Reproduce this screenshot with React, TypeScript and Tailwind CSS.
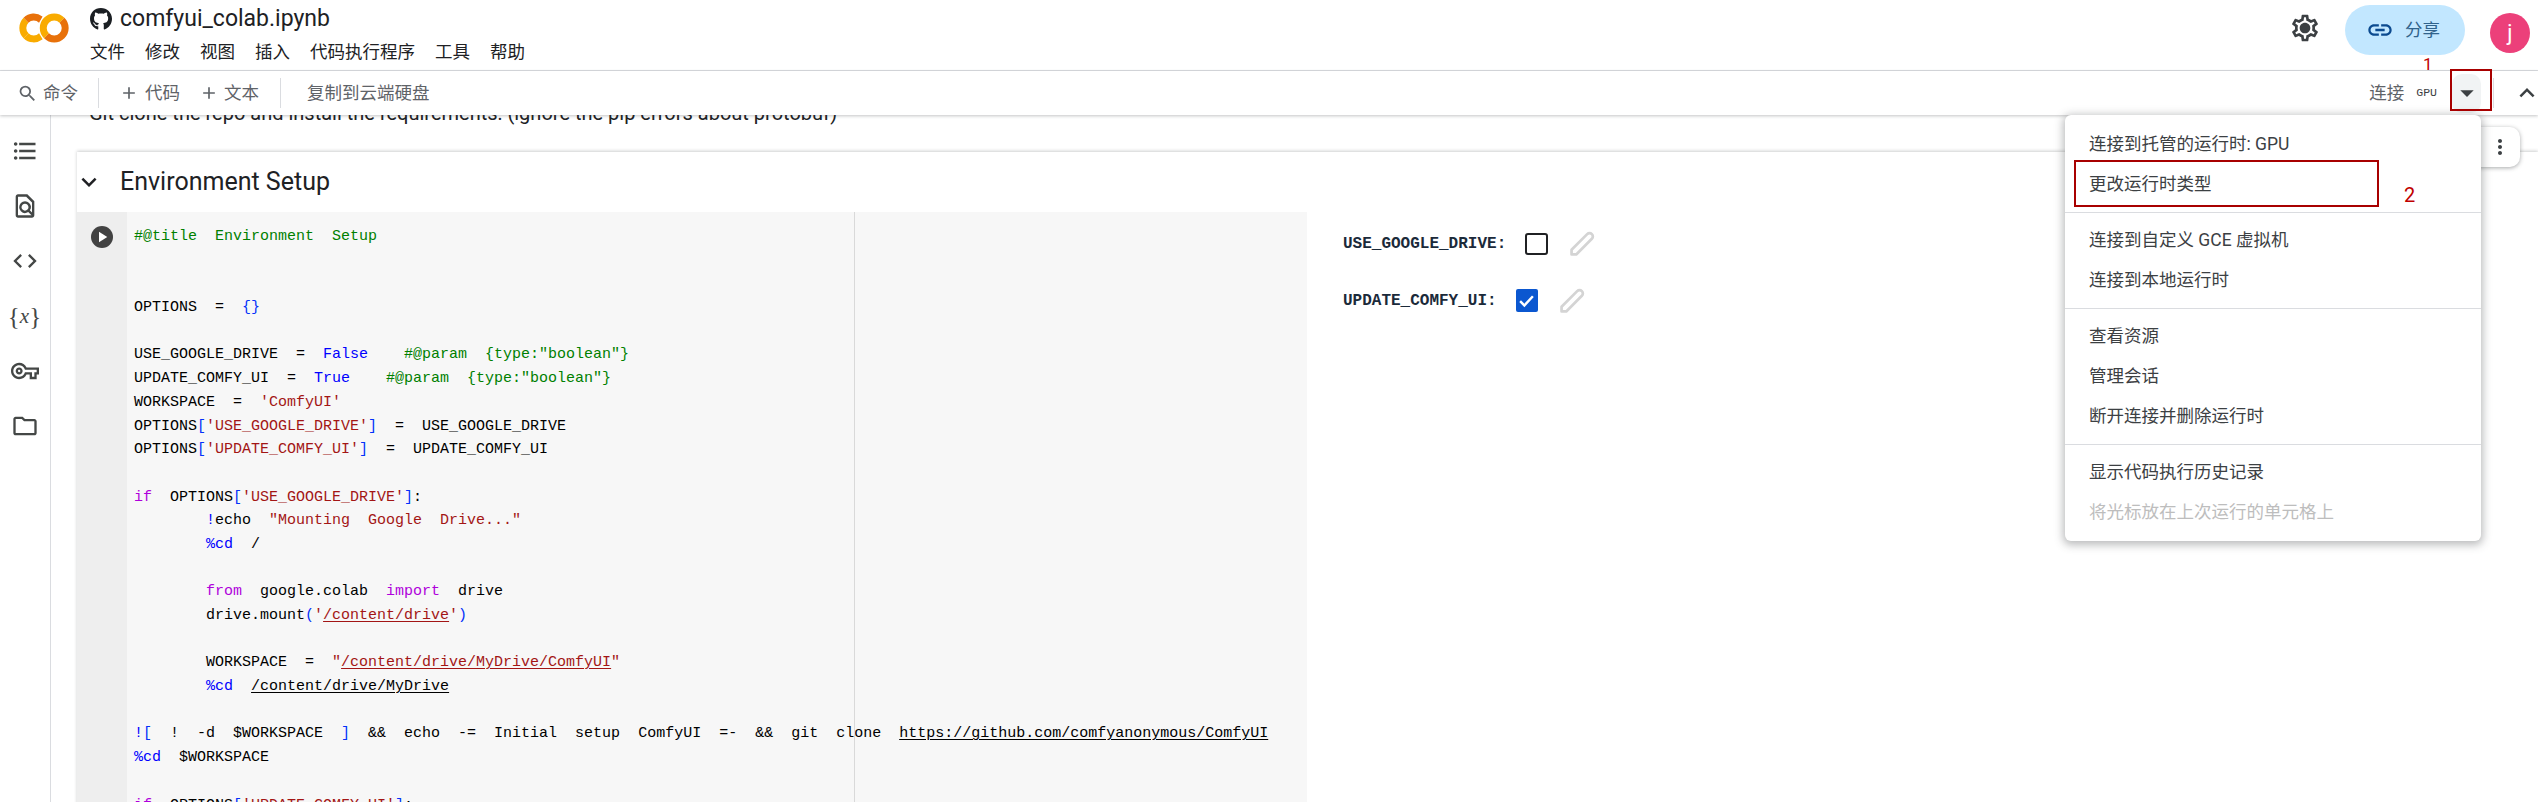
import { FaGithub } from "react-icons/fa";
import {
  MdAdd,
  MdArrowDropDown,
  MdCode,
  MdExpandLess,
  MdExpandMore,
  MdFormatListBulleted,
  MdLink,
  MdMoreVert,
  MdOutlineFindInPage,
  MdOutlineFolder,
  MdOutlineVpnKey,
  MdOutlineSettings,
  MdPlayArrow,
  MdSearch,
} from "react-icons/md";

const UI_FONT = "font-['Roboto','Noto_Sans_CJK_SC',sans-serif]";

const MENU_BAR = ["文件", "修改", "视图", "插入", "代码执行程序", "工具", "帮助"];

const MENU_GROUPS = [
  ["连接到托管的运行时: GPU", "更改运行时类型"],
  ["连接到自定义 GCE 虚拟机", "连接到本地运行时"],
  ["查看资源", "管理会话", "断开连接并删除运行时"],
  ["显示代码执行历史记录", "将光标放在上次运行的单元格上"],
];

type Tok = [string, string?];

const K = "text-[#af00db]";
const B = "text-[#0000ff]";
const P = "text-[#0431fa]";
const G = "text-[#008000]";
const S = "text-[#a31515]";
const U = "underline underline-offset-2";

const CODE: Tok[][] = [
  [["#@title  Environment  Setup", G]],
  [],
  [],
  [["OPTIONS  =  "], ["{}", P]],
  [],
  [["USE_GOOGLE_DRIVE  =  "], ["False", B], ["    "], ['#@param  {type:"boolean"}', G]],
  [["UPDATE_COMFY_UI  =  "], ["True", B], ["    "], ['#@param  {type:"boolean"}', G]],
  [["WORKSPACE  =  "], ["'ComfyUI'", S]],
  [["OPTIONS"], ["[", P], ["'USE_GOOGLE_DRIVE'", S], ["]", P], ["  =  USE_GOOGLE_DRIVE"]],
  [["OPTIONS"], ["[", P], ["'UPDATE_COMFY_UI'", S], ["]", P], ["  =  UPDATE_COMFY_UI"]],
  [],
  [["if", K], ["  OPTIONS"], ["[", P], ["'USE_GOOGLE_DRIVE'", S], ["]", P], [":"]],
  [["        "], ["!", B], ["echo  "], ['"Mounting  Google  Drive..."', S]],
  [["        "], ["%cd", B], ["  /"]],
  [],
  [["        "], ["from", K], ["  google.colab  "], ["import", K], ["  drive"]],
  [["        drive.mount"], ["(", P], ["'", S], ["/content/drive", `${S} ${U}`], ["'", S], [")", P]],
  [],
  [["        WORKSPACE  =  "], ['"', S], ["/content/drive/MyDrive/ComfyUI", `${S} ${U}`], ['"', S]],
  [["        "], ["%cd", B], ["  "], ["/content/drive/MyDrive", U]],
  [],
  [
    ["!", B],
    ["[", P],
    ["  !  -d  $WORKSPACE  "],
    ["]", P],
    ["  &&  echo  -=  Initial  setup  ComfyUI  =-  &&  git  clone  "],
    ["https://github.com/comfyanonymous/ComfyUI", U],
  ],
  [["%cd", B], ["  $WORKSPACE"]],
  [],
  [["if", K], ["  OPTIONS"], ["[", P], ["'UPDATE_COMFY_UI'", S], ["]", P], [":"]],
];

function ColabLogo() {
  return (
    <svg viewBox="0 0 24 24" className="h-[50px] w-[50px]">
      <path fill="#F9AB00" d="M4.54 9.46 2.19 7.1a6.93 6.93 0 0 0 0 9.79l2.36-2.36a3.59 3.59 0 0 1 0-5.07Z" />
      <path fill="#E8710A" d="M2.19 7.1 4.54 9.46a3.59 3.59 0 0 1 5.08 0l1.71-2.93-.1-.08A6.93 6.93 0 0 0 2.19 7.1Z" />
      <path fill="#F9AB00" d="M11.34 17.46 9.62 14.54a3.59 3.59 0 0 1-5.08 0L2.19 16.9a6.93 6.93 0 0 0 9 .65l.15-.09Z" />
      <path fill="#F9AB00" d="M12 7.1a6.93 6.93 0 0 0 0 9.79l2.36-2.36a3.59 3.59 0 1 1 5.08-5.08L21.81 7.1A6.93 6.93 0 0 0 12 7.1Z" />
      <path fill="#E8710A" d="m21.81 7.1-2.35 2.36a3.59 3.59 0 0 1-5.08 5.08L12 16.9a6.93 6.93 0 0 0 9.81-9.8Z" />
    </svg>
  );
}

function Pencil() {
  return (
    <svg viewBox="0 0 24 24" fill="none" stroke="#d4d4d4" strokeWidth="2.6" className="ml-[22px] h-[25px] w-[25px] shrink-0">
      <path d="M1.5 22.5v-4.5L16.5 3a2.9 2.9 0 0 1 4.5 4.5L6 22.5Z" strokeLinejoin="round" />
    </svg>
  );
}

function Header() {
  return (
    <header className="flex h-[71px] shrink-0 items-start border-b border-[#dadce0] bg-white">
      <div className="mt-[3px] ml-[19px] w-[71px]">
        <ColabLogo />
      </div>
      <div className="flex flex-col">
        <div className="mt-[6px] flex h-[26px] items-center">
          <FaGithub className="h-[24px] w-[22px] text-[#1b1f23]" />
          <span className="ml-[8px] text-[23px] leading-[26px] text-[#202124]">comfyui_colab.ipynb</span>
        </div>
        <nav className="mt-[10px] flex gap-[20px] text-[17.5px] leading-[20px] text-[#202124]">
          {MENU_BAR.map((m) => (
            <span key={m}>{m}</span>
          ))}
        </nav>
      </div>
      <div className="ml-auto flex items-center">
        <div className="relative mt-[1px]">
          <MdOutlineSettings className="h-[32px] w-[32px] text-[#3c4043]" />
          <span className="absolute top-[12px] left-[12px] h-[8px] w-[8px] rounded-full bg-[#3c4043]" />
        </div>
        <div className="mt-[5px] ml-[24px] flex h-[50px] w-[120px] items-center rounded-full bg-[#c2e7ff] pl-[21px]">
          <MdLink className="h-[28px] w-[28px] text-[#0b4a8f]" />
          <span className="ml-[11px] text-[17.5px] text-[#31638c]">分享</span>
        </div>
        <div className="mt-[10px] mr-[8px] ml-[25px] flex h-[40px] w-[40px] items-center justify-center rounded-full bg-[#ec407a] text-[22px] text-white">
          j
        </div>
      </div>
    </header>
  );
}

function Toolbar() {
  return (
    <div className="relative z-10 flex h-[44px] shrink-0 items-center bg-white text-[17.5px] text-[#5f6368] shadow-[0_1px_3px_rgba(60,64,67,0.3)]">
      <MdSearch className="ml-[17px] h-[21px] w-[21px]" />
      <span className="ml-[5px]">命令</span>
      <div className="ml-[20px] h-[30px] w-px bg-[#dadce0]" />
      <MdAdd className="ml-[20px] h-[20px] w-[20px]" />
      <span className="ml-[6px]">代码</span>
      <MdAdd className="ml-[19px] h-[20px] w-[20px]" />
      <span className="ml-[5px]">文本</span>
      <div className="ml-[21px] h-[30px] w-px bg-[#dadce0]" />
      <span className="ml-[26px]">复制到云端硬盘</span>
      <div className="ml-auto flex items-center">
        <span>连接</span>
        <span className="ml-[12px] font-['Liberation_Mono',monospace] text-[11.5px] text-[#3c4043]">GPU</span>
        <div className="ml-[15px] flex h-[39px] w-[29px] items-center justify-center rounded-[10px] bg-[#f1f3f4]">
          <MdArrowDropDown className="h-[32px] w-[32px] shrink-0 text-[#3c4043]" />
        </div>
        <div className="ml-[12px] h-[30px] w-px bg-[#dadce0]" />
        <MdExpandLess className="mr-[-4px] ml-[18px] h-[30px] w-[30px] shrink-0 text-[#3c4043]" />
      </div>
    </div>
  );
}

function Sidebar() {
  const cls = "h-[28px] w-[28px] text-[#444746]";
  return (
    <aside className="flex w-[51px] shrink-0 flex-col items-center gap-[27px] border-r border-[#dadce0] bg-white pt-[22px] pr-[1px]">
      <MdFormatListBulleted className={cls} />
      <MdOutlineFindInPage className={cls} />
      <MdCode className={cls} />
      <span className="flex h-[28px] w-[28px] items-center justify-center font-['Liberation_Serif',serif] text-[25px] leading-none font-medium text-[#444746]">
        {"{"}
        <i className="text-[21px]">x</i>
        {"}"}
      </span>
      <MdOutlineVpnKey className={cls} />
      <MdOutlineFolder className={cls} />
    </aside>
  );
}

function CodeLines() {
  return (
    <div className="pt-[13px] pl-[7px] font-['Liberation_Mono',monospace] text-[15px] leading-[23.7px] whitespace-pre text-black">
      {CODE.map((line, i) => (
        <div key={i} className="h-[23.7px]">
          {line.map(([t, c], j) => (
            <span key={j} className={c}>
              {t}
            </span>
          ))}
        </div>
      ))}
    </div>
  );
}

function FormField({ name, checked }: { name: string; checked: boolean }) {
  return (
    <div className="flex h-[23px] items-center">
      <span className="font-['Liberation_Mono',monospace] text-[16px] font-bold text-[#1b2a3a]">{name}:</span>
      {checked ? (
        <span className="ml-[19px] flex h-[23px] w-[22px] shrink-0 items-center justify-center rounded-[2px] bg-[#0b57d0]">
          <svg viewBox="0 0 24 24" fill="none" stroke="white" strokeWidth="3.4" className="h-[17px] w-[17px]">
            <path d="M3 13l6 6L21 6" />
          </svg>
        </span>
      ) : (
        <span className="ml-[19px] h-[22px] w-[23px] shrink-0 rounded-[3px] border-2 border-[#202124]" />
      )}
      <Pencil />
    </div>
  );
}

function Cell() {
  return (
    <section className="mt-[29px] ml-[26px] bg-white shadow-[0_-1px_3px_rgba(60,64,67,0.25)]">
      <div className="flex h-[60px] items-center">
        <MdExpandMore className="ml-[-3px] h-[30px] w-[30px] shrink-0 text-[#202124]" />
        <h2 className="ml-[16px] text-[25px] text-[#202124]">Environment Setup</h2>
      </div>
      <div className="flex">
        <div className="relative flex h-[600px] w-[1230px] shrink-0 bg-[#f7f7f7]">
          <div className="flex w-[50px] shrink-0 justify-center bg-[#eeeeee] pt-[14px]">
            <span className="flex h-[22px] w-[22px] items-center justify-center rounded-full bg-[#424242]">
              <MdPlayArrow className="h-[18px] w-[18px] text-white" />
            </span>
          </div>
          <CodeLines />
          {/* vertical ruler in the editor */}
          <div className="absolute top-0 bottom-0 left-[777px] w-px bg-[#d9d9d9]" />
        </div>
        <div className="ml-[36px] flex flex-col gap-[34px] pt-[20px]">
          <FormField name="USE_GOOGLE_DRIVE" checked={false} />
          <FormField name="UPDATE_COMFY_UI" checked />
        </div>
      </div>
    </section>
  );
}

function RuntimeMenu() {
  return (
    <div className="absolute top-[115px] left-[2065px] z-30 w-[416px] rounded-[6px] bg-white py-[9px] text-[17.5px] text-[#3c4043] shadow-[0_2px_8px_2px_rgba(60,64,67,0.35)]">
      {MENU_GROUPS.map((group, i) => (
        <div key={i}>
          {i > 0 && <div className="my-[7.5px] h-px bg-[#dadce0]" />}
          {group.map((item) => (
            <div
              key={item}
              className={`flex h-[40px] items-center pl-[24px] ${item.startsWith("将光标") ? "text-[#bdbdbd]" : ""}`}
            >
              {item}
            </div>
          ))}
        </div>
      ))}
    </div>
  );
}

export default function App() {
  return (
    <div className={`relative flex h-[802px] w-[2538px] flex-col overflow-hidden bg-white ${UI_FONT}`}>
      <Header />
      <Toolbar />
      <div className="flex min-h-0 flex-1">
        <Sidebar />
        <div className="min-w-0 flex-1 overflow-hidden">
          <p className="mt-[-12px] ml-[38px] text-[20px] leading-[20px] text-[#202124]">
            Git clone the repo and install the requirements: (ignore the pip errors about protobuf)
          </p>
          <Cell />
        </div>
      </div>

      {/* cell toolbar peeking out behind the menu */}
      <div className="absolute top-[127px] right-[18px] z-20 flex h-[40px] w-[60px] items-center justify-end rounded-[10px] bg-white pr-[8px] shadow-[0_1px_4px_rgba(60,64,67,0.45)]">
        <MdMoreVert className="h-[24px] w-[24px] text-[#3c4043]" />
      </div>

      <RuntimeMenu />

      {/* red annotations */}
      <div className="absolute top-[69px] left-[2450px] z-40 h-[42px] w-[42px] border-2 border-[#a80000]" />
      <span className="absolute top-[54px] left-[2423px] z-40 text-[17px] leading-[20px] text-[#c00000]">1</span>
      <div className="absolute top-[160px] left-[2074px] z-40 h-[47px] w-[305px] border-2 border-[#a80000]" />
      <span className="absolute top-[183px] left-[2404px] z-40 text-[20px] leading-[24px] text-[#c00000]">2</span>
    </div>
  );
}
